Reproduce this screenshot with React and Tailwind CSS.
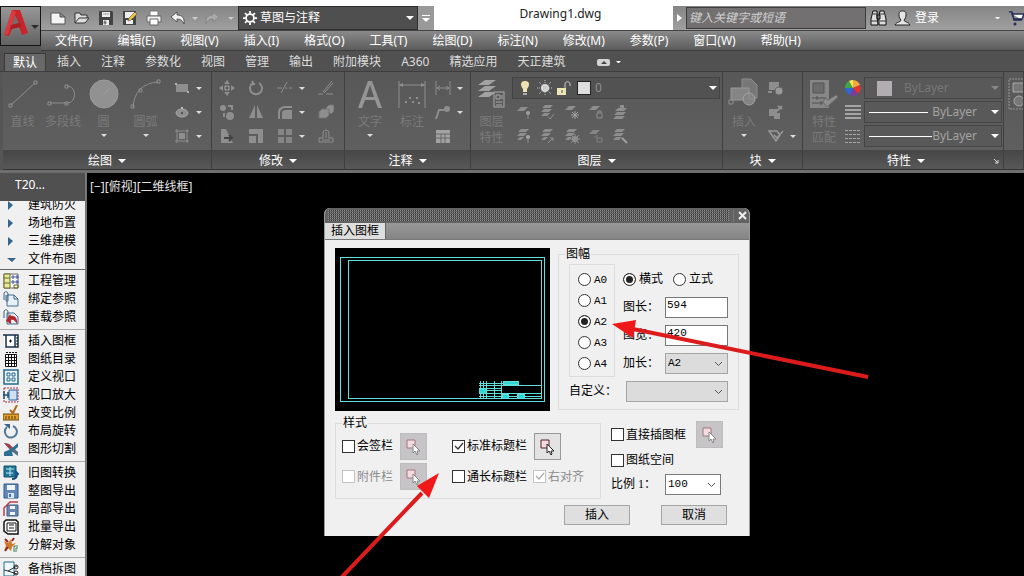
import React from 'react';
import { clsx } from 'clsx';

const menus = ['文件(F)', '编辑(E)', '视图(V)', '插入(I)', '格式(O)', '工具(T)', '绘图(D)', '标注(N)', '修改(M)', '参数(P)', '窗口(W)', '帮助(H)'];
const tabs = ['默认', '插入', '注释', '参数化', '视图', '管理', '输出', '附加模块', 'A360', '精选应用', '天正建筑'];

const Caret = ({ className, size = 6 }) => (
    <svg className={clsx('shrink-0', className)} width={size} height={size / 2} viewBox="0 0 8 4" fill="currentColor" aria-hidden="true">
        <path d="M0 0h8L4 4z" />
    </svg>
);

const Svg = ({ size = 16, box = size, children, className }) => (
    <svg className={clsx('shrink-0', className)} width={size} height={size} viewBox={`0 0 ${box} ${box}`} fill="none" aria-hidden="true">
        {children}
    </svg>
);

/* ---------- quick access icons ---------- */

const quickIcons = {
    新建: <path d="M1 3h9l5 4v7H1z M10 3v4h5" fill="#f4f4f4" stroke="#555" />,
    打开: <path d="M1 13V3h5l1 2h6v3M1 13l4-5h10l-4 5z" fill="#ddd" stroke="#333" />,
    保存: (
        <>
            <path d="M1 1h13l1 1v13H1z" fill="#444" />
            <path d="M4 2h8v5H4zM5 10h6v5H5z" fill="#eee" />
            <path d="M6 11h2v3H6zM5 4h6" fill="#444" stroke="#999" />
        </>
    ),
    另存为: (
        <>
            <path d="M1 1h13v14H1z" fill="#444" />
            <path d="M3 2h9v6H3zM4 10h7v4H4z" fill="#eee" />
            <path d="M6 11l1-3 6-6 2 2-6 6z" fill="#f0c040" stroke="#555" strokeWidth=".6" />
        </>
    ),
    打印: (
        <>
            <path d="M4 1h8v5H4z" fill="#fff" stroke="#777" />
            <path d="M1 6h14v6H1z" fill="#f2f2f2" stroke="#666" />
            <path d="M4 9h8v6H4z" fill="#fff" stroke="#666" />
        </>
    ),
    放弃: <path d="M1 7l6-5v3c5 0 8 3 7 9-1-3-3-5-7-5v3z" fill="#f0f0f0" stroke="#444" strokeWidth=".8" />,
    重做: <path d="M15 7L9 2v3C4 5 1 8 2 14c1-3 3-5 7-5v3z" fill="#aaa" stroke="#828282" strokeWidth=".8" />,
};

const QuickButton = ({ name }) => (
    <button type="button" aria-label={name} className="flex h-full w-6 items-center justify-center">
        <Svg>{quickIcons[name]}</Svg>
    </button>
);

const Logo = () => (
    <button type="button" aria-label="应用程序菜单" className="flex h-10 w-[41px] items-start border border-[#161616] bg-linear-to-b from-[#989898] to-[#626262] pl-[3px] pt-[2px]">
        <svg width="25" height="28" viewBox="0 0 25 28" aria-hidden="true">
            <path d="M0 26L8 1h8l8 23-6 2-3-8-7 2-3 7z" fill="#c8242b" />
            <path d="M11 6l-4 10 8-2z" fill="#7d6768" />
            <path d="M8 1l4 2-8 22-4 1z" fill="#dc3a40" />
            <path d="M7 16l9-2 1 4-11 2z" fill="#a81f26" />
        </svg>
        <Caret className="ml-[2px] mt-4 text-[#2c2c2c]" size={8} />
    </button>
);

const TitleRow = () => (
    <div className="flex h-6">
        <div className="flex shrink-0 items-center bg-linear-to-b from-[#858585] to-[#a0a0a0] pl-[5px] text-white">
            {['新建', '打开', '保存', '另存为', '打印', '放弃'].map((n) => <QuickButton key={n} name={n} />)}
            <Caret className="mx-[2px] text-[#ccc]" />
            <QuickButton name="重做" />
            <Caret className="mx-1 text-[#ccc]" />
        </div>
        <button type="button" className="flex w-[180px] shrink-0 items-center border border-[#2e2e2e] bg-[#4f4f4f] pl-1 pr-[3px] text-xs text-white">
            <Svg size={14} box={16}>
                <circle cx="8" cy="8" r="4.5" stroke="#fff" strokeWidth="2" />
                <path d="M8 0v3M8 13v3M0 8h3M13 8h3M2.300 2.300l2.200 2.200M11.500 11.500l2.200 2.200M2.300 13.700l2.200-2.200M11.500 4.500l2.200-2.200" stroke="#fff" strokeWidth="2" />
            </Svg>
            <span className="ml-[3px] flex-1 text-left">草图与注释</span>
            <Caret size={8} />
        </button>
        <button type="button" aria-label="自定义快速访问工具栏" className="flex w-4 shrink-0 flex-col items-center justify-center gap-[2px] bg-[#999] text-white">
            <span className="h-px w-2 bg-white" />
            <Caret size={8} />
        </button>
        <h1 className="flex-1 bg-white pl-[14px] text-center text-xs leading-4 text-[#222]">Drawing1.dwg</h1>
        <div className="flex w-[351px] shrink-0 items-center bg-linear-to-b from-[#858585] to-[#a0a0a0] text-xs text-white">
            <svg className="mx-1 shrink-0" width="5" height="8" viewBox="0 0 5 8" fill="#fff" aria-hidden="true"><path d="M0 0l5 4-5 4z" /></svg>
            <input aria-label="搜索" placeholder="键入关键字或短语" className="h-[22px] w-[180px] border border-[#3c3c3c] bg-[#727070] pb-px pl-[2px] text-xs italic placeholder:text-[#d0d0d0]" />
            <button type="button" aria-label="搜索按钮" className="ml-1">
                <Svg size={17} box={17}>
                    <path d="M3 1h4v5l1 9H1V9zM10 1h4l2 8v6H9V6zM7 5h3v4H7z" fill="#ddd" stroke="#111" />
                    <path d="M3 4h4M10 4h4M1 11h6M10 11h6" stroke="#333" />
                </Svg>
            </button>
            <button type="button" className="ml-[7px] flex items-center gap-1">
                <Svg size={17} box={17}>
                    <path d="M8.500 1C5 1 5 3 5 5s1 4 2 5c0 2-5 2-6 5h15c-1-3-6-3-6-5 1-1 2-3 2-5s0-4-3.500-4z" fill="#e5e5e5" stroke="#222" />
                </Svg>
                登录
            </button>
            <Caret className="ml-auto mr-2" size={5} />
            <Svg size={16}>
                <path d="M1 2h3l2 8h8M4 4h12l-2 5H6z" fill="#fff" stroke="#222d55" strokeWidth="1.500" />
                <circle cx="7" cy="14" r="1.500" fill="#222d55" />
            </Svg>
        </div>
    </div>
);

const Header = () => (
    <header className="flex shrink-0 bg-white pt-[6px]">
        <div className="bg-[#555]"><Logo /></div>
        <div className="min-w-0 flex-1">
            <TitleRow />
            <nav className="flex h-[21px] items-center gap-[25px] border-b border-t border-b-[#3c3c3c] border-t-[#444] bg-linear-to-b from-[#8a8a8a] to-[#5c5c5c] pl-[14px] text-xs text-white">
                {menus.map((m) => <button type="button" key={m} className="whitespace-nowrap">{m}</button>)}
            </nav>
        </div>
    </header>
);

const TabRow = () => (
    <div className="flex h-[21px] shrink-0 items-end border-b border-[#3e3e3e] bg-[#515151] pl-1 text-xs text-[#dcdcdc]">
        {tabs.map((t, i) => (
            <button
                type="button"
                key={t}
                className={clsx('h-[18px] whitespace-nowrap', i === 0 ? 'mr-px border-x border-t border-[#3a3a3a] bg-[#686868] px-2 text-white' : 'px-[10px]')}
            >
                {t}
            </button>
        ))}
        <button type="button" aria-label="最小化功能区" className="ml-[22px] flex h-[18px] items-center gap-[6px] text-white">
            <svg width="13" height="7" viewBox="0 0 13 7" aria-hidden="true">
                <rect width="13" height="7" rx="2" fill="#d5d5d5" />
                <path d="M4 5l3-3 3 3z" fill="#444" />
            </svg>
            <Caret size={5} />
        </button>
    </div>
);

/* ---------- ribbon drawings ---------- */

const G = '#8e8e8e';

const big = {
    line: <><path d="M4 27L28 5" stroke={G} /><path d="M2 26h3v3H2zM27 3h3v3h-3z" stroke={G} /></>,
    pline: <><path d="M3 25h17c10 0 10-17 0-17" stroke={G} /><path d="M1 24h3v3H1zM18 24h3v3h-3zM18 7h3v3h-3z" stroke={G} /></>,
    circle: <><circle cx="16" cy="16" r="14" fill="#919191" stroke="#9c9c9c" /><path d="M15 17l7-7" stroke="#9c9c9c" /></>,
    arc: <><path d="M3 29C4 15 12 5 28 4" stroke={G} /><path d="M1 27h3v3H1zM9 11h3v3H9zM27 2h3v3h-3z" stroke={G} /></>,
    text: <path d="M4 30L14 3h4l10 27h-4l-3-8H11l-3 8zM12 19h8L16 7z" fill="#959595" />,
    dim: <><path d="M3 3v27M29 3v27M3 7h26" stroke={G} /><path d="M3 7l4-2v4zM29 7l-4-2v4z" fill={G} /><path d="M9 24h2M13 20h2M16 24h2M20 20h2M22 25h2" stroke={G} strokeWidth="2" /></>,
    layer: (
        <>
            <path d="M9 2h11l-7 5H2zM9 8h11l-7 5H2zM9 14h11l-7 5H2z" fill="#a2a2a2" />
            <rect x="18" y="14" width="10" height="15" fill="#5c5c5c" stroke="#a8a8a8" />
            <path d="M20 17h4v4h-4zM26 17v4M20 24h6M20 27h6" stroke="#a8a8a8" />
        </>
    ),
    block: (
        <>
            <path d="M14 1h9l6 6v13H14z" fill="#777" stroke={G} />
            <path d="M3 10h18v12H3z" fill="#858585" stroke="#999" />
            <circle cx="21" cy="21" r="6" fill="#858585" stroke="#a4a4a4" />
            <path d="M1 22h4v4H1zM21 16v5h5" stroke={G} />
        </>
    ),
    props: (
        <>
            <path d="M2 2h19v28H2z" fill="#868686" />
            <path d="M5 5h11v10H5z" fill="#6c6c6c" stroke="#555" />
            <path d="M4 20h14M4 25h11M9 18v4M13 23v4" stroke="#505050" />
            <path d="M15 24l4 5 11-10-2-2-8 5-3-2z" fill="#8d8d8d" stroke="#6a6a6a" />
        </>
    ),
};

const small = {
    rect: <><path d="M2 4h12v8H2z" fill={G} /><path d="M1 3h2v2H1zM13 11h2v2h-2z" fill="#b0b0b0" /></>,
    ellipse: <><ellipse cx="8" cy="9" rx="6" ry="4" fill={G} stroke="#aaa" /><path d="M7 8h2v2H7z" fill="#555" /><path d="M7 3h2v2H7z" fill="#bbb" /></>,
    hatch: <><path d="M3 1v14M13 1v14M1 3h14M1 13h14" stroke={G} /><path d="M5 5h6v6H5z" fill={G} /></>,
    move: <><path d="M8 0l3 4H5zM8 16l3-4H5zM0 8l4-3v6zM16 8l-4-3v6z" fill={G} /><path d="M6 6h4v4H6z" stroke="#aaa" /></>,
    rotate: <path d="M5 3a6 6 0 1 0 6 0M4 1l2 3-4 1" stroke={G} strokeWidth="2" />,
    trim: <path d="M0 8h5M8 8h2M12 8h3M4 13l6-11" stroke={G} />,
    erase: <path d="M5 12L14 1M6 13L15 3M0 14h5M8 14h7" stroke={G} />,
    copy: <><circle cx="4" cy="4" r="3" fill={G} /><circle cx="11" cy="12" r="4" fill={G} /><path d="M9 2h4v4M5 9v4" stroke={G} strokeWidth="2" /></>,
    mirror: <path d="M7 1v13H1zM9 1v13h6z" fill={G} />,
    fillet: <path d="M1 15V9c0-5 3-7 8-7h6v2H9C5 4 3 6 3 9v6zM5 15V9c0-2 1-3 4-3h6v9z" fill={G} />,
    explode: <path d="M1 8l3-3h7v6l-3 3H1zM8 4l3-3h5v6l-3 3" fill={G} stroke="#757575" />,
    stretch: <><path d="M2 1h5l7 14H2z" fill={G} /><path d="M5 10h8M10 7l3 3-3 3" stroke="#444" strokeWidth="2" /></>,
    scale: <path d="M1 1h14v14h-5V6H1zM1 8h7v7H1z" fill={G} />,
    array: <path d="M1 1h6v6H1zM9 1h6v6H9zM1 9h6v6H1zM9 9h6v6H9z" fill="#858585" />,
    offset: <path d="M1 14h14v-4h-4V5a3 3 0 0 0-6 0v5H1zM4 12h8M8 4v6" stroke={G} />,
    linear: <path d="M1 1v14M15 1v14M2 8h12M5 6L2 8l3 2M11 6l3 2-3 2" stroke={G} />,
    leader: <><path d="M1 15l3-9h6" stroke={G} strokeWidth="2" /><circle cx="12" cy="5" r="3" fill={G} /></>,
    table: <><path d="M1 2h14v13H1z" fill="#a2a2a2" /><path d="M1 6h14M1 10h14M6 6v9M10 6v9" stroke="#666" /></>,
    isolate: <><path d="M5 3h7l-4 4H1z" fill={G} /><circle cx="12" cy="9" r="2" fill="#a0a0a0" /><path d="M12 10v5" stroke={G} /></>,
    match: <><path d="M5 1h8l-3 3H2zM4 5h8l-3 3H1zM4 9h6l-3 3H1z" fill={G} /><path d="M8 13l2 2 4-5" stroke={G} /></>,
    freeze: <><path d="M5 2h7l-4 4H1z" fill={G} /><path d="M11 7v8M7 11h8M8 8l6 6M14 8l-6 6" stroke="#a0a0a0" /></>,
    lock: <><path d="M5 2h7l-4 4H1z" fill={G} /><path d="M9 9h5v5H9zM10 9V7h3v2" stroke={G} /></>,
    current: <path d="M6 4h9l-3 3H3zM5 8h9l-3 3H2zM4 12h9l-3 3H1zM8 1h4v3H8z" fill={G} />,
    unisolate: <><path d="M5 1h8l-3 3H2zM4 5h7l-3 3H1zM4 9h4l-3 3H1z" fill={G} /><circle cx="12" cy="9" r="2" fill="#a8a8a8" /><path d="M12 10v5" stroke={G} /></>,
    previous: <><path d="M5 1h8l-3 3H2zM4 5h7l-3 3H1zM4 9h4l-3 3H1z" fill={G} /><path d="M8 15l5-5M10 10h3v3" stroke={G} /></>,
    thaw: <><path d="M5 1h8l-3 3H2zM4 5h7l-3 3H1zM4 9h4l-3 3H1z" fill={G} /><circle cx="11" cy="11" r="3" fill={G} /><path d="M11 6v10M6 11h10M7 7l8 8M15 7l-8 8" stroke={G} /></>,
    unlock: <><path d="M5 2h7l-4 4H1z" fill="#868686" /><path d="M9 10h5v4H9zM6 9h3V7" stroke="#808080" /></>,
    walk: <><path d="M5 1h8l-3 3H2zM4 5h8l-3 3H1zM4 9h6l-3 3H1z" fill={G} /><path d="M10 10l5 5" stroke="#a0a0a0" strokeWidth="2" /></>,
    create: <><path d="M1 2h10v8H1z" fill={G} /><circle cx="11" cy="11" r="4" fill="#999" stroke="#666" /><path d="M0 12h4" stroke={G} strokeWidth="2" /></>,
    edit: <><path d="M1 5h8v7H1zM6 9h6v6H6z" fill={G} /><path d="M9 7l5-5M10 2l4 3" stroke={G} strokeWidth="2" /></>,
    attr: <path d="M1 3h8l3 4-4 6zM6 7l3 3 6-7" stroke="#999" strokeWidth="1.500" />,
    weights: <path d="M0 2h16M0 6h16M0 10h16M0 14h16" stroke="#a5a5a5" strokeWidth="2" />,
    types: <path d="M0 2.500h16M0 6.500h16M0 10.500h16M0 14.500h16" stroke="#a5a5a5" strokeDasharray="3 1" />,
    wheel: (
        <>
            <path d="M8 8V0a8 8 0 0 1 7 5z" fill="#f3a93f" />
            <path d="M8 8l7-3a8 8 0 0 1-2 9z" fill="#e0352f" />
            <path d="M8 8l5 6a8 8 0 0 1-8 1z" fill="#7a3aa0" />
            <path d="M8 8l-3 7a8 8 0 0 1-5-7z" fill="#2f68cf" />
            <path d="M8 8H0a8 8 0 0 1 4-7z" fill="#3fa648" />
            <path d="M8 8L4 1a8 8 0 0 1 4-1z" fill="#f2e85a" />
        </>
    ),
};

const Panel = ({ title, className, launcher, children }) => (
    <section className={clsx('flex shrink-0 flex-col border-r border-[#3f3f3f] shadow-[inset_1px_0_0_#6c6c6c]', className)}>
        <div className="flex h-[78px] bg-linear-to-b from-[#585858] to-[#5f5f5f]">{children}</div>
        <button type="button" className="flex h-5 items-center justify-center gap-[6px] border-b border-[#333] bg-linear-to-b from-[#464646] to-[#585858] pt-[2px] text-xs text-white">
            {launcher && <span className="w-4" />}
            <span className={launcher ? 'ml-auto' : ''}>{title}</span>
            {title && <Caret size={8} />}
            {launcher && <Svg size={6} box={6} className="ml-auto mr-1"><path d="M1 1l4 4M5 2v3H2" stroke="#ddd" /></Svg>}
        </button>
    </section>
);

const BigButton = ({ icon, label, second, caret, className }) => (
    <button type="button" className={clsx('flex shrink-0 flex-col items-center pt-[6px] text-xs leading-4 text-[#7a7a7a]', className)}>
        <Svg size={32}>{big[icon]}</Svg>
        <span className="mt-1 whitespace-nowrap">{label}</span>
        {second && <span>{second}</span>}
        {caret && <Caret className="mt-1 text-[#ddd]" />}
    </button>
);

const SmallColumn = ({ icons, carets = [], className }) => (
    <div className={clsx('shrink-0 pt-1', className)}>
        {icons.map((name, i) => (
            <button type="button" key={name} aria-label={name} className="flex h-6 items-center gap-[6px]">
                <Svg>{small[name]}</Svg>
                {carets.includes(i) && <Caret className="text-[#ddd]" size={6} />}
            </button>
        ))}
    </div>
);

const SmallRow = ({ icons }) => (
    <div className="flex gap-2 pl-1">
        {icons.map((name) => (
            <button type="button" key={name} aria-label={name} className="flex h-6 items-center"><Svg>{small[name]}</Svg></button>
        ))}
    </div>
);

const LayerPicker = () => (
    <button type="button" className="mb-px flex h-[22px] w-full items-center gap-1 border border-[#444] bg-[#525252] pl-1 pr-[2px] text-xs text-[#8e8e8e]">
        <Svg><path d="M8 1c-6 0-4 6-2 8v3h4V9c2-2 4-8-2-8z" fill="#eee3b0" /><path d="M6 13h4v2H6z" fill="#aaa" /></Svg>
        <Svg><circle cx="8" cy="8" r="4" fill="#ddd" /><path d="M8 0v16M0 8h16M2 2l12 12M14 2L2 14" stroke="#bbb" strokeDasharray="1 1" /></Svg>
        <Svg><path d="M0 8h9v7H0z" fill="#ebe6b5" /><path d="M8 8V4c0-3 5-3 5 0v2" stroke="#ccc" /><path d="M5 10v3" stroke="#555" /></Svg>
        <span className="size-[14px] border border-[#222] bg-[#dedede]" />
        <span className="flex-1 text-left">0</span>
        <Caret className="text-white" size={8} />
    </button>
);

const PropertyPicker = ({ swatch, line }) => (
    <button type="button" className="flex h-[22px] w-full items-center border border-[#454545] bg-[#595959] pl-1 pr-[2px] text-xs text-[#a4a4a4]">
        {swatch ? <span className="ml-2 size-[15px] bg-[#b1adb1]" /> : <span className={clsx('h-px bg-white', line)} />}
        <span className={clsx('flex-1', swatch ? 'pl-3 text-left text-[#777]' : 'pr-[14px] text-right')}>ByLayer</span>
        <Caret className={swatch ? 'text-[#888]' : 'text-white'} size={8} />
    </button>
);

const Ribbon = () => (
    <div className="flex shrink-0 overflow-hidden border-b-[3px] border-[#6e6e6e] bg-[#555] pl-[3px]">
        <Panel title="绘图" className="w-[209px]">
            <BigButton icon="line" label="直线" className="w-[39px]" />
            <BigButton icon="pline" label="多段线" className="w-[42px]" />
            <BigButton icon="circle" label="圆" caret className="w-[39px]" />
            <BigButton icon="arc" label="圆弧" caret className="w-[45px]" />
            <SmallColumn icons={['rect', 'ellipse', 'hatch']} carets={[0, 1, 2]} className="ml-[6px]" />
        </Panel>
        <Panel title="修改" className="w-[133px]">
            <SmallColumn icons={['move', 'copy', 'stretch']} className="ml-[7px]" />
            <SmallColumn icons={['rotate', 'mirror', 'scale']} className="ml-[13px]" />
            <SmallColumn icons={['trim', 'fillet', 'array']} carets={[0, 1, 2]} className="ml-[13px]" />
            <SmallColumn icons={['erase', 'explode', 'offset']} className="ml-[13px]" />
        </Panel>
        <Panel title="注释" className="w-[126px]">
            <BigButton icon="text" label="文字" caret className="ml-[6px] w-[38px]" />
            <BigButton icon="dim" label="标注" className="w-[46px]" />
            <SmallColumn icons={['linear', 'leader', 'table']} carets={[0, 1]} />
        </Panel>
        <Panel title="图层" className="w-[252px]">
            <BigButton icon="layer" label="图层" second="特性" className="w-[41px]" />
            <div className="min-w-0 flex-1 pr-[2px] pt-[5px]">
                <LayerPicker />
                <SmallRow icons={['isolate', 'match', 'freeze', 'lock', 'current']} />
                <SmallRow icons={['unisolate', 'previous', 'thaw', 'unlock', 'walk']} />
            </div>
        </Panel>
        <Panel title="块" className="w-20">
            <BigButton icon="block" label="插入" caret className="w-[42px]" />
            <SmallColumn icons={['create', 'edit', 'attr']} carets={[2]} className="ml-[3px]" />
        </Panel>
        <Panel title="特性" launcher className="w-[201px]">
            <BigButton icon="props" label="特性" second="匹配" className="w-[42px]" />
            <SmallColumn icons={['wheel', 'weights', 'types']} />
            <div className="flex flex-1 flex-col gap-[2px] pl-[3px] pr-px pt-[5px]">
                <PropertyPicker swatch />
                <PropertyPicker line="w-[59px]" />
                <PropertyPicker line="w-[63px]" />
            </div>
        </Panel>
        <Panel className="min-w-5 flex-1 overflow-hidden">
            <Svg size={32} className="ml-1 mt-[6px]">
                <path d="M1 1h30v30H1z" stroke="#999" strokeDasharray="2 1" />
                <path d="M5 5h11v9H5z" fill="#777" stroke="#aaa" />
                <circle cx="11" cy="23" r="5" fill="#777" stroke="#aaa" />
            </Svg>
        </Panel>
    </div>
);

/* ---------- side menu ---------- */

const sideIcons = {
    project: <><path d="M1 1h14v14H1z" fill="#fff" stroke="#666" /><path d="M1 1h6v14H1z" fill="#e9e9a0" stroke="#6b6b22" /><path d="M1 5h6M1 10h6" stroke="#6b6b22" /><path d="M9 3h2v2H9zM13 3h2v2h-2zM9 8h2v2H9zM13 8h2v2h-2z" stroke="#3d52a5" /><path d="M11 12h4v3h-4z" stroke="#6b6b22" /></>,
    bind: <><path d="M4 4h7l4 4v7H4z" fill="#e8f1f7" stroke="#3f6f8f" /><path d="M11 4v4h4M1 9V3c0-3 4-3 4 0v6c0 2-2 2-2 0V4" stroke="#3a6482" /></>,
    reload: <><path d="M4 4h7l4 4v7H4z" fill="#e8f1f7" stroke="#3f6f8f" /><path d="M1 9V3c0-3 4-3 4 0v6" stroke="#3a6482" /><path d="M14 15c1-6-3-9-6-8L7 5l-4 7 5 3v-4c3-1 4 1 6 4z" fill="#b3262c" /></>,
    frame: <><path d="M1 2h14v12H1z" fill="#fff" /><path d="M0 2h15v12H3V2M12 2v12" stroke="#15324a" strokeWidth="1.500" /><path d="M6 8h3M7.500 6.500v3M13 5h2M13 8h2M13 11h2" stroke="#111" /></>,
    list: <><path d="M2.500 3.500h11v12h-11z" fill="#fff" stroke="#111" /><path d="M2 6.500h12M2 9.500h12M2 12.500h12M5.500 3v13M8.500 3v13M11.500 3v13" stroke="#111" /><path d="M3 1.500h11" stroke="#111" strokeDasharray="2 1" /></>,
    viewport: <><path d="M1 1h14v14H1z" fill="#eaf4f9" stroke="#27688c" strokeWidth="1.500" /><path d="M4 4h3v3H4zM9 4h3v3H9zM4 9h3v3H4zM9 9h3v3H9z" stroke="#27688c" /></>,
    zoom: <><path d="M1 1h14v14H1z" stroke="#a33044" strokeDasharray="2 1" /><path d="M6 3h8v10H6z" fill="#cfe0f2" stroke="#2a62a0" /><path d="M0 8h6M1 4v8M5 5v6" stroke="#1f5378" strokeWidth="1.500" /></>,
    scale: <><path d="M0 9h16v6H0z" fill="#e0a030" stroke="#70460a" /><path d="M3 11v3M6 11v3M9 11v3M12 11v3" stroke="#5a390a" /><path d="M7 5l3 3 4-8" stroke="#b06a1a" strokeWidth="2" /></>,
    rotate: <><path d="M10 3a6 6 0 1 1-6 1" stroke="#51789b" strokeWidth="2" /><path d="M1 1h6v5z" fill="#3c6387" /></>,
    cut: <><path d="M1 2l5 1 9 8v4l-8-6z" fill="#5c6c84" /><path d="M15 2v4l-6 5 1 4H1v-4l7-3z" fill="#2f6f91" /><path d="M1 2l5 1 3 3-2 2z" fill="#a83c46" /></>,
    convert: <><path d="M1 1h12v11H1z" fill="#1f7898" stroke="#145068" /><path d="M3 4h8M3 8h7M7 2v9" stroke="#bfe6f0" /><path d="M9 14c4 0 5-2 5-5M12 6l3 3-3 2" stroke="#174f80" strokeWidth="2" /></>,
    save: <><path d="M1 1h14v14H1z" fill="#6288b8" stroke="#315986" /><path d="M4 2h8v5H4z" fill="#eef4fa" /><path d="M5 10h6v5H5z" fill="#dbe6ef" /><path d="M6 11h2v3H6z" fill="#456f9d" /></>,
    part: <><path d="M4 4h11v11H4z" fill="#6b87ad" stroke="#3c5c86" /><path d="M7 5h5v3H7zM7 11h5v3H7z" fill="#eef4fa" /><path d="M1 15V7l6-6h8" stroke="#c33a48" strokeWidth="1.500" /></>,
    batch: <><path d="M3 1h10l2 2v12H5l-4-3V3z" fill="#fff" stroke="#111" strokeWidth="1.500" /><path d="M4 4h9v8H4z" fill="#fff" stroke="#111" /><path d="M6 6h5M6 9h5" stroke="#111" /></>,
    split: <><path d="M1 4l4 2 3-4 1 5 4-1-4 4-1 4-3-3-4 2 2-4z" fill="#d1782e" /><path d="M2 2l3 3M11 1l-2 3M2 14l3-4" stroke="#8b2b1e" strokeWidth="2" /><path d="M11 15V9h4M13 15v-4h2" stroke="#39805c" /></>,
    archive: <><path d="M1 1h10v14H1z" fill="#eef7fb" stroke="#236b87" /><path d="M1 9l4 1 9-5M5 10l9 3" stroke="#333" /><circle cx="13" cy="6" r="2" stroke="#222" /><circle cx="13" cy="12" r="2" stroke="#222" /></>,
    closed: <path d="M5 4l5 4-5 5z" fill="#33658e" />,
    open: <path d="M4 7h9l-4 4z" fill="#33658e" />,
};

const sideGroups = [
    [['closed', '建筑防火'], ['closed', '场地布置'], ['closed', '三维建模'], ['open', '文件布图']],
    [['project', '工程管理'], ['bind', '绑定参照'], ['reload', '重载参照']],
    [['frame', '插入图框'], ['list', '图纸目录'], ['viewport', '定义视口'], ['zoom', '视口放大'], ['scale', '改变比例'], ['rotate', '布局旋转'], ['cut', '图形切割']],
    [['convert', '旧图转换'], ['save', '整图导出'], ['part', '局部导出'], ['batch', '批量导出'], ['split', '分解对象']],
    [['archive', '备档拆图']],
];

const SideMenu = () => (
    <aside className="flex w-[87px] shrink-0 flex-col border-r-2 border-[#777] bg-[#f0f0f0] text-xs text-black">
        <h2 className="h-7 shrink-0 bg-[#505050] pl-[15px] leading-6 text-white">T20...</h2>
        <div className="min-h-0 flex-1 overflow-hidden">
            {sideGroups.map((group, g) => (
                <div key={g} className={clsx('border-b', g === 0 ? '-mt-[5px] border-[#666] pb-px' : 'border-[#aaa] pb-[3px] pt-[2px]')}>
                    {group.map(([icon, label]) => (
                        <button type="button" key={label} className="flex h-[18px] w-full items-center gap-[9px] pl-[3px]">
                            <Svg>{sideIcons[icon]}</Svg>
                            <span className="whitespace-nowrap">{label}</span>
                        </button>
                    ))}
                </div>
            ))}
        </div>
    </aside>
);

/* ---------- insert frame dialog ---------- */

const mono = "font-['Liberation_Mono','Noto_Sans_CJK_SC',monospace] text-[11px]";

const Radio = ({ label, name, checked, className }) => (
    <label className={clsx('flex items-center gap-[3px] whitespace-nowrap', className)}>
        <input
            type="radio"
            name={name}
            defaultChecked={checked}
            className="size-[13px] shrink-0 appearance-none rounded-full border border-[#333] bg-white checked:bg-[#222] checked:shadow-[inset_0_0_0_2px_#fff]"
        />
        {label}
    </label>
);

const Check = ({ label, checked, disabled }) => (
    <label className={clsx('flex items-center gap-[2px] whitespace-nowrap', disabled && 'text-[#8c8c8c]')}>
        <span className="relative flex">
            <input
                type="checkbox"
                defaultChecked={checked}
                disabled={disabled}
                className="size-[13px] appearance-none border border-[#333] bg-white disabled:border-[#c4c4c4]"
            />
            {checked && <Svg size={13} className="pointer-events-none absolute inset-0"><path d="M3 6l3 3 5-6" stroke={disabled ? '#aaa' : '#333'} strokeWidth="1.300" /></Svg>}
        </span>
        {label}
    </label>
);

const Pick = ({ disabled, label, className }) => (
    <button
        type="button"
        disabled={disabled}
        aria-label={label}
        className={clsx('flex size-[27px] shrink-0 items-center justify-center border', disabled ? 'border-[#bdbdbd] bg-[#c6c4c6]' : 'border-[#999] bg-[#e3e3e3]', className)}
    >
        <Svg size={17}>
            <path d="M2 2h8v8H2z" fill="#f3dcdf" stroke={disabled ? '#a3777e' : '#5a1d25'} />
            <path d="M8 6v9l2-2 2 4 1-1-1-3h3z" fill="#fff" stroke={disabled ? '#888' : '#222'} />
        </Svg>
    </button>
);

const Select = ({ options = [], disabled, id, className }) => (
    <span className={clsx('relative flex', className)}>
        <select
            id={id}
            disabled={disabled}
            className={clsx('h-[21px] w-full appearance-none border border-[#7a7a7a] bg-white pl-[2px] leading-4 text-black disabled:border-[#a5a5a5] disabled:bg-[#dcdcdc] disabled:opacity-100', mono)}
        >
            {options.map((o) => <option key={o}>{o}</option>)}
        </select>
        <svg className="pointer-events-none absolute right-[5px] top-2" width="9" height="6" viewBox="0 0 9 6" fill="none" stroke="#555" aria-hidden="true">
            <path d="M1 1l3.500 3.500L8 1" />
        </svg>
    </span>
);

const Field = ({ label, id, children }) => (
    <div className="flex h-7 items-center">
        <label htmlFor={id} className="w-[42px] shrink-0">{label}</label>
        {children}
    </div>
);

const inputStyle = clsx('h-[21px] w-[63px] border border-[#777] bg-white pb-1 pl-px', mono);

const FramePreview = () => (
    <svg className="mt-[2px] h-[163px] w-[215px] shrink-0" viewBox="0 0 215 163" fill="none" stroke="#5fe0dc" shapeRendering="crispEdges" role="img" aria-label="图框预览">
        <rect width="215" height="163" fill="#000" stroke="none" />
        <path d="M5.500 9.500h204v144h-204zM13.500 12.500h193v138h-193z" />
        <path d="M145.500 133v17M148.500 133v17M151.500 133v17M159.500 133v17M166.500 133v17M144 135.500h40M144 137.500h63M144 140.500h23M144 142.500h23M144 145.500h63M144 148.500h63" />
        <path d="M144 140h7v5h-7zM168 133h15v3h-15zM167 146h6v4h-6zM182 146h7v4h-7z" fill="#2fd6d6" />
    </svg>
);

const InsertDialog = () => (
    <div
        role="dialog"
        aria-label="插入图框"
        className="absolute left-[237px] top-[35px] w-[426px] overflow-hidden rounded-t-md border-x border-[#9a9a9a] bg-[#f0f0f0] pb-[11px] font-['Liberation_Serif','Noto_Sans_CJK_SC',serif] text-xs leading-4 text-black"
    >
        <div className="flex h-[15px] items-center bg-[#626262] pl-[3px] pr-[2px]">
            <span className="h-3 flex-1 [background-image:repeating-linear-gradient(0deg,#626262_0_1px,transparent_1px_2px),repeating-linear-gradient(90deg,#8c8c8c_0_1px,#3a3a3a_1px_2px)]" />
            <button type="button" aria-label="关闭" className="ml-1 flex h-3 items-center border-l border-[#777] pl-1">
                <Svg size={9}><path d="M1 1l7 7M8 1L1 8" stroke="#eee" strokeWidth="2" /></Svg>
            </button>
        </div>
        <div className="flex h-[17px] border-b border-[#777] bg-linear-to-b from-[#989898] to-[#858585]">
            <button type="button" className="border-r border-[#666] bg-[#dedede] px-[6px]">插入图框</button>
        </div>
        <div className="flex items-start gap-2 px-[10px] pt-[6px]">
            <FramePreview />
            <fieldset className="h-[164px] min-w-0 flex-1 border border-[#dcdcdc] pl-[10px]">
                <legend className="-ml-1 px-px">图幅</legend>
                <div className="flex items-start gap-2">
                    <div className="mt-[2px] h-[113px] w-[46px] border border-[#dcdcdc] pl-2 pt-1">
                        {['A0', 'A1', 'A2', 'A3', 'A4'].map((s) => (
                            <div key={s} className="flex h-[21px] items-center"><Radio label={s} name="size" checked={s === 'A2'} className={mono} /></div>
                        ))}
                    </div>
                    <div className="pt-[3px]">
                        <div className="flex h-7 items-center gap-[10px]">
                            <Radio label="横式" name="direction" checked />
                            <Radio label="立式" name="direction" />
                        </div>
                        <Field label="图长：" id="length"><input id="length" defaultValue="594" className={inputStyle} /></Field>
                        <Field label="图宽：" id="width"><input id="width" defaultValue="420" className={inputStyle} /></Field>
                        <Field label="加长：" id="extend"><Select id="extend" options={['A2']} disabled className="w-[63px]" /></Field>
                    </div>
                </div>
                <div className="flex h-7 items-center">
                    <label htmlFor="custom" className="w-[57px]">自定义：</label>
                    <Select id="custom" disabled className="w-[102px]" />
                </div>
            </fieldset>
        </div>
        <div className="mt-1 flex items-start gap-[10px] px-[10px]">
            <fieldset className="h-[84px] w-[266px] shrink-0 border border-[#dcdcdc] pl-[6px]">
                <legend className="px-px">样式</legend>
                <div className="flex h-[30px] items-center">
                    <div className="w-[58px]"><Check label="会签栏" /></div>
                    <Pick disabled label="选择会签栏" className="mr-[25px]" />
                    <div className="w-[82px]"><Check label="标准标题栏" checked /></div>
                    <Pick label="选择标题栏" />
                </div>
                <div className="flex h-[31px] items-center">
                    <div className="w-[58px]"><Check label="附件栏" disabled /></div>
                    <Pick disabled label="选择附件栏" className="mr-[25px]" />
                    <div className="w-[81px]"><Check label="通长标题栏" /></div>
                    <Check label="右对齐" checked disabled />
                </div>
            </fieldset>
            <div className="pt-[6px]">
                <div className="flex h-[27px] items-center">
                    <div className="w-[85px]"><Check label="直接插图框" /></div>
                    <Pick disabled label="选择图框" />
                </div>
                <div className="flex h-6 items-center"><Check label="图纸空间" /></div>
                <div className="flex h-6 items-center">
                    <label htmlFor="ratio" className="w-[54px]">比例 1：</label>
                    <Select id="ratio" options={['100']} className="w-14" />
                </div>
            </div>
        </div>
        <div className="mt-[6px] flex justify-end gap-[31px] pr-[22px]">
            {['插入', '取消'].map((t) => (
                <button type="button" key={t} className="h-5 w-[66px] border border-[#a5a5a5] bg-[#dfdfdf]">{t}</button>
            ))}
        </div>
    </div>
);

const Arrows = () => (
    <svg className="pointer-events-none absolute left-0 top-0" width="937" height="403" viewBox="0 0 937 403" fill="#f01818" stroke="#dc1c1c" strokeWidth="4" aria-hidden="true">
        <path d="M546 156L781 204M335 320L252 407" />
        <path d="M525 151l24-4-3 18zM352 300l-22 13 12 12z" stroke="none" />
    </svg>
);

const App = () => (
    <div className="flex h-screen flex-col overflow-hidden bg-black font-['Noto_Sans','Noto_Sans_CJK_SC',sans-serif]">
        <Header />
        <TabRow />
        <Ribbon />
        <div className="flex min-h-0 flex-1">
            <SideMenu />
            <main className="relative min-w-0 flex-1 overflow-hidden bg-black">
                <button type="button" className="ml-[3px] mt-1 text-xs text-[#e4e4e4]">[−][俯视][二维线框]</button>
                <InsertDialog />
                <Arrows />
            </main>
        </div>
    </div>
);

export default App;
